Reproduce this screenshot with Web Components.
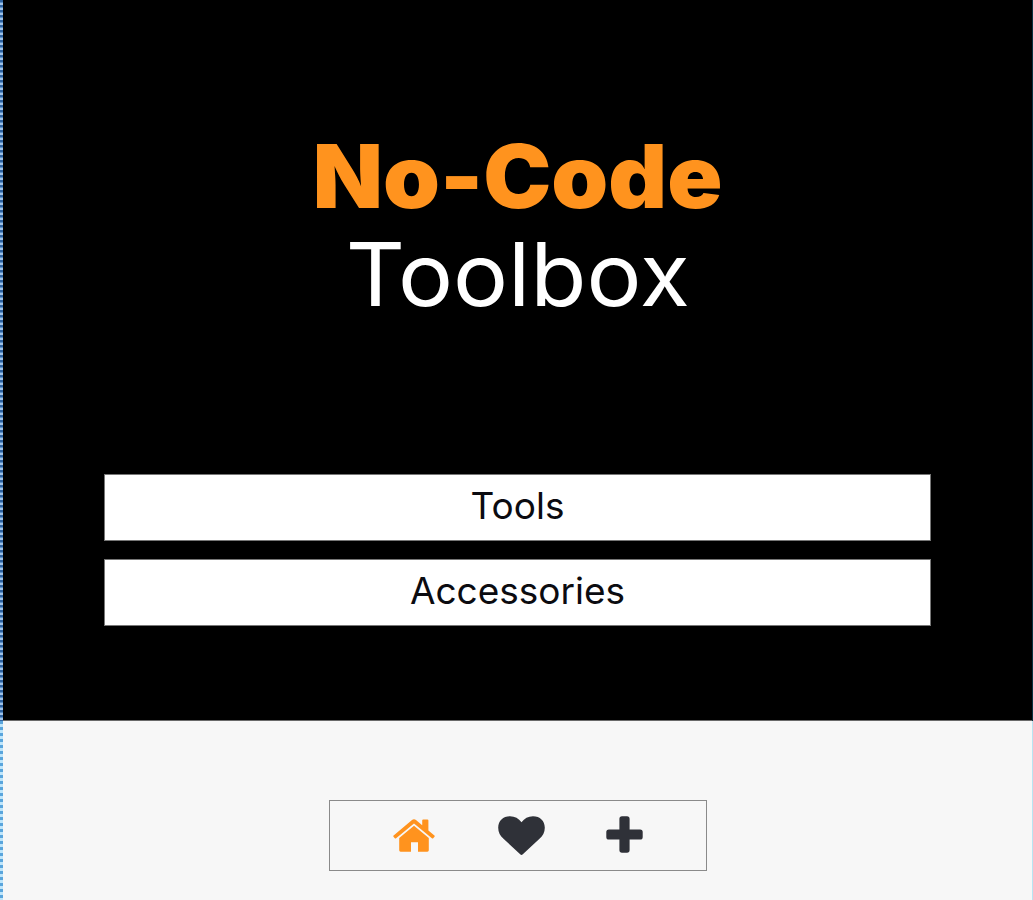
<!DOCTYPE html>
<html lang="en">
<head>
<meta charset="utf-8">
<title>No-Code Toolbox</title>
<style>
    body {
        margin: 0;
        font-family: Inter, "Open Sans", sans-serif;
        overflow: hidden;
    }
</style>
</head>
<body>
<toolbox-page>
    <toolbox-hero slot="hero">
        <span slot="brand">No-Code</span>
        <span slot="name">Toolbox</span>
        <menu-button>Tools</menu-button>
        <menu-button>Accessories</menu-button>
    </toolbox-hero>
    <icon-bar>
        <nav-icon name="home" active></nav-icon>
        <nav-icon name="heart"></nav-icon>
        <nav-icon name="plus"></nav-icon>
    </icon-bar>
</toolbox-page>

<script>
class ToolboxPage extends HTMLElement {
    constructor() {
        super();
        this.attachShadow({ mode: 'open' });
        this.shadowRoot.innerHTML = `
            <style>
                :host {
                    display: grid;
                    grid-template-columns: 3px 1fr 1px;
                    grid-template-rows: 721px 179px;
                    height: 900px;
                    background: #f7f7f7;
                }

                .edge {
                    background: repeating-linear-gradient(#2d62a0 0 2px, #5c90c8 2px 3px, #a0c2e6 3px 5px);
                }

                .edge.light {
                    background: repeating-linear-gradient(#5aa5dc 0 3px, #bfe6fb 3px 6px);
                }

                .rim {
                    background: #07303f;
                }

                .rim.light {
                    background: #b9e4f2;
                }

                footer {
                    display: flex;
                    justify-content: center;
                    align-items: flex-start;
                    padding-top: 79px;
                }
            </style>
            <div class="edge"></div>
            <slot name="hero"></slot>
            <div class="rim"></div>
            <div class="edge light"></div>
            <footer><slot></slot></footer>
            <div class="rim light"></div>
            `;
    }
}

class ToolboxHero extends HTMLElement {
    constructor() {
        super();
        this.attachShadow({ mode: 'open' });
        this.shadowRoot.innerHTML = `
            <style>
                :host {
                    display: flex;
                    flex-direction: column;
                    box-sizing: border-box;
                    padding: 127px 101px 0 101px;
                    background: #000;
                    border-bottom: 1px solid #6a6a6a;
                }

                h1 {
                    display: flex;
                    flex-direction: column;
                    align-items: center;
                    height: 347px;
                    margin: 0;
                    font-size: 87.5px;
                    line-height: 98px;
                    color: #fff;
                }

                .brand {
                    font-weight: 900;
                    color: #ff931e;
                    transform: scaleX(1.042);
                }

                .name {
                    font-weight: 400;
                    transform: scaleX(1.05);
                }

                nav {
                    display: flex;
                    flex-direction: column;
                    gap: 18px;
                }
            </style>
            <h1>
                <div class="brand"><slot name="brand"></slot></div>
                <div class="name"><slot name="name"></slot></div>
            </h1>
            <nav><slot></slot></nav>
            `;
    }
}

class MenuButton extends HTMLElement {
    constructor() {
        super();
        this.attachShadow({ mode: 'open' });
        this.shadowRoot.innerHTML = `
            <style>
                :host {
                    display: block;
                }

                button {
                    display: block;
                    width: 100%;
                    height: 67px;
                    padding: 0 0 3px;
                    border: 1px solid #777;
                    background: #fff;
                    color: #0b0b10;
                    font: 400 37px/60px Inter, "Open Sans", sans-serif;
                }
            </style>
            <button><slot></slot></button>
            `;
    }
}

class IconBar extends HTMLElement {
    constructor() {
        super();
        this.attachShadow({ mode: 'open' });
        this.shadowRoot.innerHTML = `
            <style>
                :host {
                    display: grid;
                    grid-template-columns: 168px 47px 159px;
                    align-items: start;
                    justify-items: center;
                    box-sizing: border-box;
                    width: 378px;
                    height: 71px;
                    border: 1px solid #8a8a8a;
                }
            </style>
            <slot></slot>
            `;
    }
}

const icons = {
    home: `<svg width="42" height="33" viewBox="0 0 42 33" fill="currentColor">
        <path d="M21 6.8 35.8 19V31.3q0 1.4-1.4 1.4H25V23.2H18V32.7H7.6q-1.4 0-1.4-1.4V19z"/>
        <path d="M21 0.3q1.1 0 2 .8L29.2 6.2V1.6q0-1 1-1h4.2q1 0 1 1V11.4L41.4 16.4q.7.6.1 1.3l-1.3 1.6q-.6.6-1.3 0L21 4.6 3.1 19.3q-.7.6-1.3 0L.5 17.7q-.6-.7.1-1.3L19 1.1q.9-.8 2-.8z"/>
        </svg>`,
    heart: `<svg width="47" height="40" viewBox="0 0 47 41" preserveAspectRatio="none" fill="currentColor">
        <path d="M23.5 6.5C26.5 2.5 30 .3 35 .3 42 .3 46.8 5 46.8 12c0 5-2 8-5.3 11.4L24.8 39.3q-1.3 1.2-2.6 0L5.5 23.4C2.2 20 .2 17 .2 12 .2 5 5 .3 12 .3c5 0 8.5 2.2 11.5 6.2z"/>
        </svg>`,
    plus: `<svg width="37" height="37" viewBox="0 0 37 37" fill="currentColor">
        <path d="M16 .3h5q2.6 0 2.6 2.6v10.5h10.5q2.6 0 2.6 2.6v5q0 2.6-2.6 2.6H23.6v10.5q0 2.6-2.6 2.6h-5q-2.6 0-2.6-2.6V23.6H2.9Q.3 23.6.3 21v-5q0-2.6 2.6-2.6h10.5V2.9Q13.4.3 16 .3z"/>
        </svg>`
};

class NavIcon extends HTMLElement {
    constructor() {
        super();
        this.attachShadow({ mode: 'open' });
        this.shadowRoot.innerHTML = `
            <style>
                :host {
                    display: block;
                    padding-top: 15px;
                    color: #2f3138;
                }

                :host([active]) {
                    padding-top: 18px;
                    color: #ff931e;
                }

                svg {
                    display: block;
                }
            </style>
            ${icons[this.getAttribute('name')]}
            `;
    }
}

customElements.define('toolbox-page', ToolboxPage);
customElements.define('toolbox-hero', ToolboxHero);
customElements.define('menu-button', MenuButton);
customElements.define('icon-bar', IconBar);
customElements.define('nav-icon', NavIcon);
</script>
</body>
</html>
